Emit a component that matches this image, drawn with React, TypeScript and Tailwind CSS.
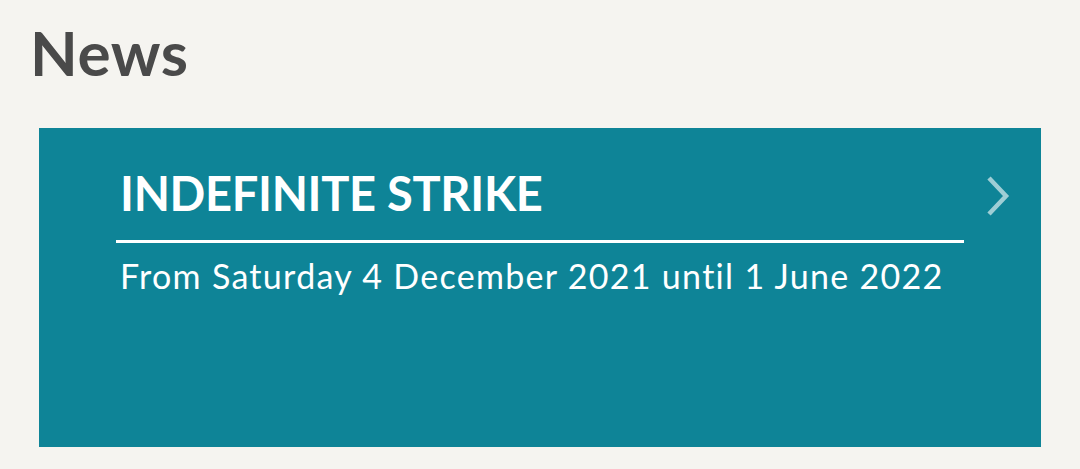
import React from "react";

export default function App() {
    return (
        <div className="min-h-[469px] w-full bg-[#f5f4f0] pl-[30px] pt-[21px] font-['Lato',sans-serif] [font-variant-ligatures:none]">
            <h2 className="text-[62px] font-bold leading-none tracking-[0.6px] text-[#4a4a4a]">News</h2>
            <div className="ml-[9px] mt-[45px] flex h-[319px] w-[1002px] bg-[#0e8497] pl-[77px]">
                <div className="flex w-[848px] flex-col pt-[42px]">
                    <h3 className="px-[4px] text-[47px] font-bold leading-none tracking-[-0.3px] text-white">INDEFINITE STRIKE</h3>
                    <div className="mt-[23px] h-[3px] w-full bg-white" />
                    <p className="mt-[16px] px-[4px] text-[34px] font-normal leading-none tracking-[1.3px] text-white">
                        From Saturday 4 December 2021 until 1 June 2022
                    </p>
                </div>
                <div className="ml-[21px] pt-[47px]">
                    <svg width="26" height="42" viewBox="0 0 26 42" fill="none">
                        <polyline points="4,3 21,21 4,39" stroke="#ffffff" strokeOpacity="0.6" strokeWidth="4.5" strokeLinecap="butt" strokeLinejoin="miter" />
                    </svg>
                </div>
            </div>
        </div>
    );
}
